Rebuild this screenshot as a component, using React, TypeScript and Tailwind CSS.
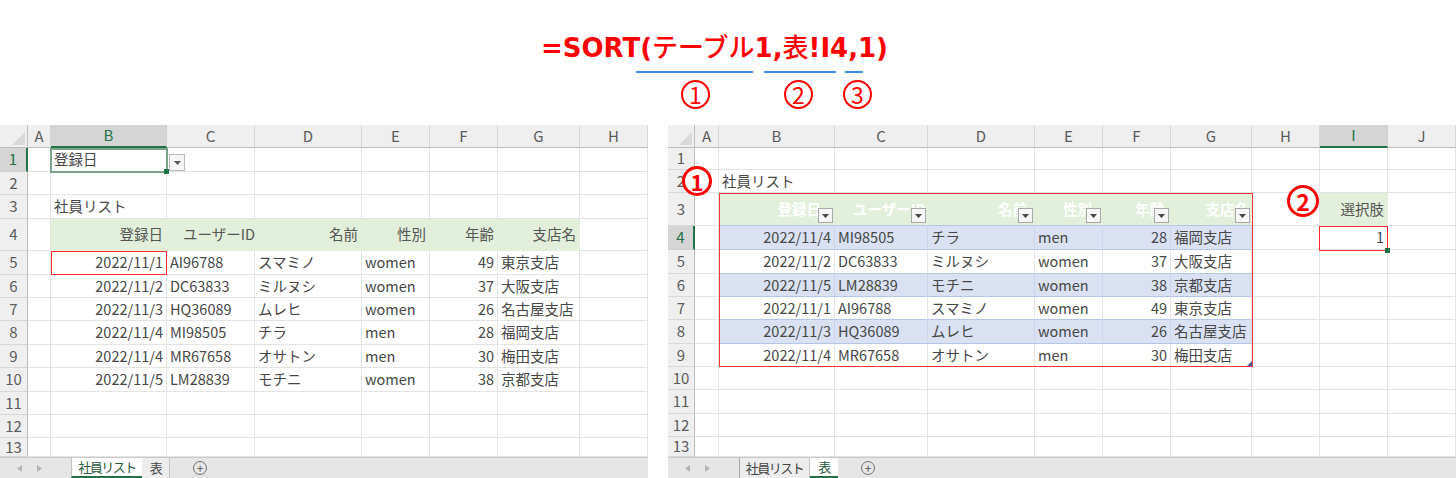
import React from 'react';

type C = {
  t?: string;
  r?: boolean;
  bg?: string;
  br?: string;
  bb?: string;
  tc?: string;
  pad?: string;
  bold?: boolean;
  filter?: boolean;
};
type Row = { n: number; h: string; sel?: boolean; cells: Record<number, C> };
type Col = { l: string; w: string; sel?: boolean };

const FONT = "font-['Noto_Sans_CJK_JP',sans-serif]";

const leftCols: Col[] = [
  { l: '', w: 'w-[28px]' },
  { l: 'A', w: 'w-[23px]' },
  { l: 'B', w: 'w-[116px]', sel: true },
  { l: 'C', w: 'w-[88px]' },
  { l: 'D', w: 'w-[107px]' },
  { l: 'E', w: 'w-[68px]' },
  { l: 'F', w: 'w-[68px]' },
  { l: 'G', w: 'w-[82px]' },
  { l: 'H', w: 'w-[68px]' },
];

const rightCols: Col[] = [
  { l: '', w: 'w-[27px]' },
  { l: 'A', w: 'w-[24px]' },
  { l: 'B', w: 'w-[116px]' },
  { l: 'C', w: 'w-[93px]' },
  { l: 'D', w: 'w-[107px]' },
  { l: 'E', w: 'w-[68px]' },
  { l: 'F', w: 'w-[68px]' },
  { l: 'G', w: 'w-[81px]' },
  { l: 'H', w: 'w-[68px]' },
  { l: 'I', w: 'w-[68px]', sel: true },
  { l: 'J', w: 'w-[68px]' },
];

const staff = [
  ['2022/11/1', 'AI96788', 'スマミノ', 'women', '49', '東京支店'],
  ['2022/11/2', 'DC63833', 'ミルヌシ', 'women', '37', '大阪支店'],
  ['2022/11/3', 'HQ36089', 'ムレヒ', 'women', '26', '名古屋支店'],
  ['2022/11/4', 'MI98505', 'チラ', 'men', '28', '福岡支店'],
  ['2022/11/4', 'MR67658', 'オサトン', 'men', '30', '梅田支店'],
  ['2022/11/5', 'LM28839', 'モチニ', 'women', '38', '京都支店'],
];

// SORT結果（選択肢1 = 登録日の昇順…ではなく表の並び）
const sorted = [
  ['2022/11/4', 'MI98505', 'チラ', 'men', '28', '福岡支店'],
  ['2022/11/2', 'DC63833', 'ミルヌシ', 'women', '37', '大阪支店'],
  ['2022/11/5', 'LM28839', 'モチニ', 'women', '38', '京都支店'],
  ['2022/11/1', 'AI96788', 'スマミノ', 'women', '49', '東京支店'],
  ['2022/11/3', 'HQ36089', 'ムレヒ', 'women', '26', '名古屋支店'],
  ['2022/11/4', 'MR67658', 'オサトン', 'men', '30', '梅田支店'],
];

const heads = ['登録日', 'ユーザーID', '名前', '性別', '年齢', '支店名'];

function dataCells(d: string[], extra: C = {}): Record<number, C> {
  return {
    1: { ...extra, t: d[0], r: true },
    2: { ...extra, t: d[1] },
    3: { ...extra, t: d[2] },
    4: { ...extra, t: d[3] },
    5: { ...extra, t: d[4], r: true },
    6: { ...extra, t: d[5] },
  };
}

const greenHead: C = { bg: 'bg-[#e2efda]', br: 'border-r-[#e2efda]', bb: 'border-b-[#e2efda]', tc: 'text-[#555555]' };

const leftHeights = ['h-[24px]', 'h-[23px]', 'h-[24px]', 'h-[32px]', 'h-[24px]', 'h-[23px]', 'h-[23px]', 'h-[24px]', 'h-[23px]', 'h-[24px]', 'h-[23px]', 'h-[23px]', 'h-[19px]'];
const rightHeights = ['h-[22px]', 'h-[23px]', 'h-[33px]', 'h-[24px]', 'h-[24px]', 'h-[23px]', 'h-[23px]', 'h-[24px]', 'h-[23px]', 'h-[23px]', 'h-[24px]', 'h-[23px]', 'h-[20px]'];

const leftRows: Row[] = leftHeights.map((h, i) => {
  const n = i + 1;
  let cells: Record<number, C> = {};
  if (n === 1) cells = { 1: { t: '登録日' } };
  if (n === 3) cells = { 1: { t: '社員リスト' } };
  if (n === 4)
    cells = {
      1: { ...greenHead, t: heads[0], r: true },
      2: { ...greenHead, t: heads[1], pad: 'pl-[16px]' },
      3: { ...greenHead, t: heads[2], r: true },
      4: { ...greenHead, t: heads[3], r: true },
      5: { ...greenHead, t: heads[4], r: true },
      6: { ...greenHead, t: heads[5], r: true },
    };
  if (n >= 5 && n <= 10) cells = dataCells(staff[n - 5]);
  return { n, h, sel: n === 1, cells };
});

const tHead: C = {
  bg: 'bg-[#e2efda]',
  br: 'border-r-[#e2efda]',
  bb: 'border-b-[#b4c6e7]',
  tc: 'text-white',
  bold: true,
  filter: true,
};
const blueBand: C = { bg: 'bg-[#d9e1f2]', br: 'border-r-[#cbd5ec]', bb: 'border-b-[#b4c6e7]' };
const whiteBand: C = { bb: 'border-b-[#b4c6e7]' };

const rightRows: Row[] = rightHeights.map((h, i) => {
  const n = i + 1;
  let cells: Record<number, C> = {};
  if (n === 2) cells = { 1: { t: '社員リスト' } };
  if (n === 3)
    cells = {
      1: { ...tHead, t: heads[0], r: true, pad: 'pr-[13px]' },
      2: { ...tHead, t: heads[1], pad: 'pl-[18px]' },
      3: { ...tHead, t: heads[2], r: true, pad: 'pr-[7px]' },
      4: { ...tHead, t: heads[3], r: true, pad: 'pr-[10px]' },
      5: { ...tHead, t: heads[4], r: true, pad: 'pr-[6px]' },
      6: { ...tHead, t: heads[5], r: true, pad: 'pr-[2px]' },
      8: { ...greenHead, t: '選択肢', r: true },
    };
  if (n >= 4 && n <= 9) cells = dataCells(sorted[n - 4], n % 2 === 0 ? blueBand : whiteBand);
  if (n === 4) cells[8] = { t: '1', r: true };
  return { n, h, sel: n === 4, cells };
});

function FilterBtn() {
  return (
    <div className="absolute right-[1px] bottom-[2px] flex h-[15px] w-[15px] items-end justify-center border border-[#a9a9a9] bg-[#f8f8f8] pb-[4px]">
      <svg width="7" height="4" viewBox="0 0 7 4">
        <polygon points="0,0 7,0 3.5,4" fill="#444" />
      </svg>
    </div>
  );
}

function CellBox({ c, w }: { c: C; w: string }) {
  return (
    <div
      className={`relative flex shrink-0 items-center border-r border-b ${w} ${c.bg ?? 'bg-white'} ${c.br ?? 'border-r-[#e3e3e3]'} ${c.bb ?? 'border-b-[#e3e3e3]'}`}
    >
      {c.t && (
        <span
          className={`w-full whitespace-nowrap text-[14.5px] leading-none ${c.r ? 'text-right' : 'text-left'} ${c.pad ?? 'px-[3px]'} ${c.tc ?? 'text-[#474747]'} ${c.bold ? 'font-bold' : ''}`}
        >
          {c.t}
        </span>
      )}
      {c.filter && <FilterBtn />}
    </div>
  );
}

function ColHead({ col }: { col: Col }) {
  return col.sel ? (
    <div className={`flex shrink-0 items-center justify-center border-r border-r-[#d0d0d0] border-b-2 border-b-[#217346] bg-[#d5d5d5] text-[15px] text-[#217346] ${col.w}`}>
      {col.l}
    </div>
  ) : (
    <div className={`flex shrink-0 items-center justify-center border-r border-r-[#d6d6d6] border-b border-b-[#bdbdbd] bg-[#efefef] text-[15px] text-[#5c5c5c] ${col.w}`}>
      {col.l}
    </div>
  );
}

function RowHead({ n, sel, w }: { n: number; sel?: boolean; w: string }) {
  return sel ? (
    <div className={`flex shrink-0 items-center justify-center border-r-2 border-r-[#217346] border-b border-b-[#d0d0d0] bg-[#d5d5d5] text-[15px] text-[#217346] ${w}`}>
      {n}
    </div>
  ) : (
    <div className={`flex shrink-0 items-center justify-center border-r border-r-[#bdbdbd] border-b border-b-[#d8d8d8] bg-[#efefef] text-[15px] text-[#5c5c5c] ${w}`}>
      {n}
    </div>
  );
}

function Corner({ w }: { w: string }) {
  return (
    <div className={`flex shrink-0 items-end justify-end border-r border-r-[#bdbdbd] border-b border-b-[#bdbdbd] bg-[#efefef] pr-[2px] pb-[2px] ${w}`}>
      <svg width="13" height="13" viewBox="0 0 13 13">
        <polygon points="13,0 13,13 0,13" fill="#d9d9d9" />
      </svg>
    </div>
  );
}

function Tab({ label, active, w, edge }: { label: string; active: boolean; w: string; edge?: boolean }) {
  return active ? (
    <div className={`flex shrink-0 items-center justify-center border-b-2 border-b-[#217346] bg-white text-[13px] tracking-[-1.5px] text-[#2c5a3c] ${edge ? 'border-l border-l-[#c4c4c4]' : ''} ${w}`}>
      {label}
    </div>
  ) : (
    <div className={`flex shrink-0 items-center justify-center border-r border-r-[#c4c4c4] bg-[#ededed] text-[13px] tracking-[-1.5px] text-[#444] ${edge ? 'border-l border-l-[#a8a8a8]' : ''} ${w}`}>
      {label}
    </div>
  );
}

function TabBar({ active }: { active: 0 | 1 }) {
  return (
    <div className="flex h-[21px] border-t border-t-[#cacaca] bg-[#e6e6e6]">
      <div className="flex w-[71px] shrink-0 items-center">
        <svg className="ml-[17px]" width="5" height="7" viewBox="0 0 5 7">
          <polygon points="5,0 5,7 0,3.5" fill="#b5b5b5" />
        </svg>
        <svg className="ml-[15px]" width="5" height="7" viewBox="0 0 5 7">
          <polygon points="0,0 0,7 5,3.5" fill="#b5b5b5" />
        </svg>
      </div>
      <Tab label="社員リスト" active={active === 0} w="w-[71px]" edge />
      <Tab label="表" active={active === 1} w="w-[28px]" />
      <div className="ml-[23px] flex h-[14px] w-[14px] shrink-0 items-center justify-center self-center rounded-full border border-[#6f6f6f] text-[12px] leading-none text-[#555]">
        +
      </div>
    </div>
  );
}

function Sheet({
  cols,
  rows,
  active,
  width,
  children,
}: {
  cols: Col[];
  rows: Row[];
  active: 0 | 1;
  width: string;
  children?: React.ReactNode;
}) {
  return (
    <div className={`relative flex shrink-0 flex-col ${width}`}>
      <div className="flex h-[23px]">
        <Corner w={cols[0].w} />
        {cols.slice(1).map((c) => (
          <ColHead key={c.l} col={c} />
        ))}
      </div>
      {rows.map((r) => (
        <div key={r.n} className={`flex ${r.h}`}>
          <RowHead n={r.n} sel={r.sel} w={cols[0].w} />
          {cols.slice(1).map((c, i) => (
            <CellBox key={c.l} c={r.cells[i] ?? {}} w={c.w} />
          ))}
        </div>
      ))}
      <TabBar active={active} />
      {children}
    </div>
  );
}

function Mark({ n, cls }: { n: string; cls: string }) {
  return (
    <div className={`absolute flex items-center justify-center rounded-full bg-white text-[#ff0000] ${cls}`}>
      {n}
    </div>
  );
}

export default function App() {
  return (
    <div className={`h-[478px] w-[1456px] overflow-hidden bg-white ${FONT}`}>
      <div className="relative h-[125px]">
        <div className="whitespace-nowrap pt-[32px] pl-[541px] font-['DejaVu_Sans','Noto_Sans_CJK_JP',sans-serif] text-[26px] leading-[28px] font-bold text-[#ff0000]">
          =SORT(<span className={`${FONT} font-medium`}>テーブル</span>1,<span className={`${FONT} font-medium`}>表</span>!I4,1)
        </div>
        <div className="absolute top-[71px] left-[636px] h-[2px] w-[117px] bg-[#3b8fde]" />
        <div className="absolute top-[71px] left-[764px] h-[2px] w-[72px] bg-[#3b8fde]" />
        <div className="absolute top-[71px] left-[845px] h-[2px] w-[18px] bg-[#3b8fde]" />
        <Mark n="1" cls="left-[681px] top-[80px] h-[29px] w-[29px] border-2 border-[#ff0000] text-[23px] leading-none" />
        <Mark n="2" cls="left-[784px] top-[80px] h-[29px] w-[29px] border-2 border-[#ff0000] text-[23px] leading-none" />
        <Mark n="3" cls="left-[843px] top-[80px] h-[29px] w-[29px] border-2 border-[#ff0000] text-[23px] leading-none" />
      </div>

      <div className="flex gap-[20px]">
        <Sheet cols={leftCols} rows={leftRows} active={0} width="w-[648px]">
          <div className="absolute top-[23px] left-[50px] h-[25px] w-[118px] border-2 border-[#7aa487]">
            <div className="absolute -right-[3px] -bottom-[3px] h-[5px] w-[5px] bg-[#217346]" />
          </div>
          <div className="absolute top-[29px] left-[169px] flex h-[17px] w-[16px] items-center justify-center border border-[#b8b8b8] bg-[#f6f6f6]">
            <svg width="7" height="4" viewBox="0 0 7 4">
              <polygon points="0,0 7,0 3.5,4" fill="#555" />
            </svg>
          </div>
          <div className="absolute top-[126px] left-[51px] h-[24px] w-[116px] border-[1.5px] border-[#ff2a2a]" />
        </Sheet>

        <Sheet cols={rightCols} rows={rightRows} active={1} width="w-[788px]">
          <div className="absolute top-[68px] left-[51px] h-[174px] w-[534px] border-[1.5px] border-[#ff3535]">
            <svg className="absolute right-0 bottom-0" width="5" height="5" viewBox="0 0 5 5">
              <polygon points="5,0 5,5 0,5" fill="#3f5fa8" />
            </svg>
          </div>
          <div className="absolute top-[101px] left-[651px] h-[25px] w-[69px] border-[1.5px] border-[#ff2a2a]">
            <div className="absolute -right-[3px] -bottom-[3px] h-[5px] w-[5px] bg-[#217346]" />
          </div>
          <Mark n="1" cls="left-[14px] top-[41px] h-[30px] w-[30px] border-[3px] border-[#ff0000] text-[22px] font-bold leading-none" />
          <Mark n="2" cls="left-[619px] top-[60px] h-[32px] w-[32px] border-[3px] border-[#ff0000] text-[23px] font-bold leading-none" />
        </Sheet>
      </div>
    </div>
  );
}
